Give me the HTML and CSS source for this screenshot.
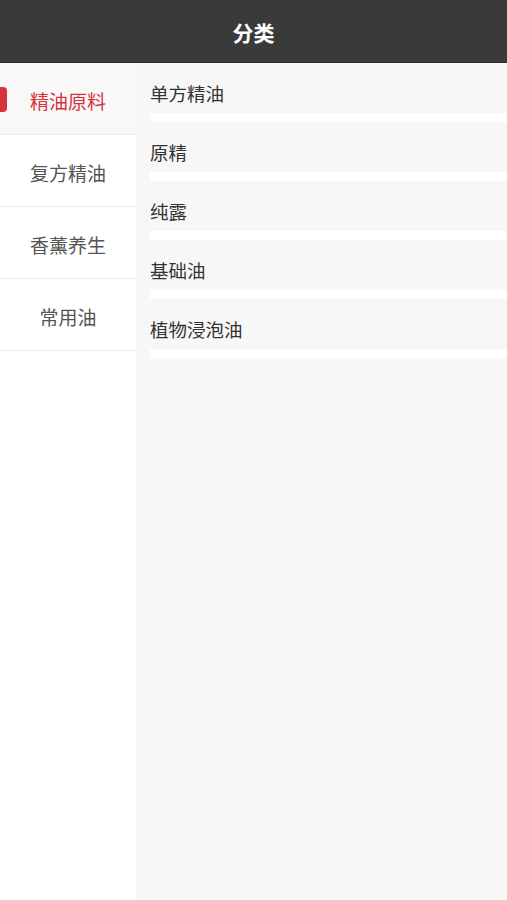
FILE: index.html
```html
<!DOCTYPE html>
<html>
<head>
    <meta charset="utf-8">
    <title>分类</title>
    <link rel="stylesheet" href="styles.css">
</head>
<body>
    <header>
        <h1>分类</h1>
    </header>
    <div class="main">
        <!-- Left category menu -->
        <ul class="menu">
            <li class="active">精油原料</li>
            <li>复方精油</li>
            <li>香薰养生</li>
            <li>常用油</li>
        </ul>

        <!-- Sub categories -->
        <ul class="sub-list">
            <li>单方精油</li>
            <li>原精</li>
            <li>纯露</li>
            <li>基础油</li>
            <li>植物浸泡油</li>
        </ul>
    </div>
</body>
</html>
```

FILE: styles.css
```css
/* General Reset */
* {
    margin: 0;
    padding: 0;
    box-sizing: border-box;
}
body {
    font-family: "Noto Sans CJK SC", "Noto Sans", sans-serif;
    background-color: #ffffff;
    color: #333333;
    height: 900px;
    display: flex;
    flex-direction: column;
}
ul {
    list-style: none;
}
header {
    height: 63px;
    background: #3a3a3a;
    border-bottom: 1px solid #2e2e2e;
    display: flex;
    align-items: center;
    justify-content: center;
}
header h1 {
    color: #ffffff;
    font-size: 21px;
    font-weight: bold;
    margin-top: 2px;
}
.main {
    flex: 1;
    display: flex;
}
.menu {
    width: 136px;
    background: #ffffff;
}
.menu li {
    position: relative;
    height: 72px;
    padding-top: 3px;
    border-bottom: 1px solid #ececec;
    display: flex;
    align-items: center;
    justify-content: center;
    font-size: 19px;
    color: #555555;
}
.menu li.active {
    background: #f8f8f8;
    color: #d5333b;
}
.menu li.active::before {
    content: "";
    position: absolute;
    left: 0;
    top: 24px;
    width: 7px;
    height: 25px;
    background: #d6333d;
    border-radius: 0 4px 4px 0;
}
.sub-list {
    flex: 1;
    background: #f7f7f7;
    padding-left: 14px;
}
.sub-list li {
    height: 59px;
    padding-top: 10px;
    border-bottom: 9px solid #ffffff;
    display: flex;
    align-items: center;
    font-size: 18.5px;
    color: #333333;
}
```
